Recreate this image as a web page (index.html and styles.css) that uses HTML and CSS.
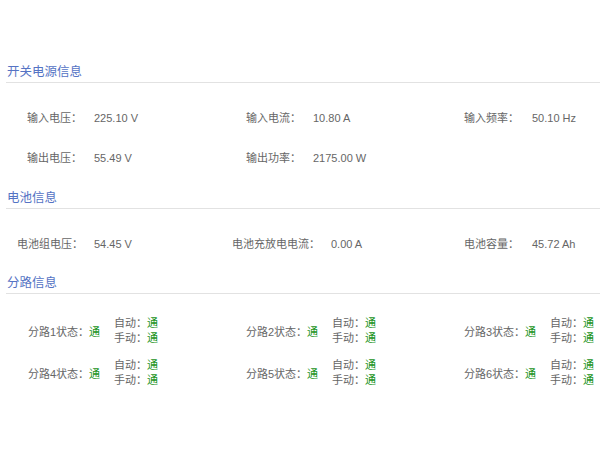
FILE: index.html
```html
<!DOCTYPE html>
<html lang="zh">
<head>
<meta charset="utf-8">
<title>设备信息</title>
<link rel="stylesheet" href="styles.css">
</head>
<body>
<div class="page">
  <h2 class="title">开关电源信息</h2>
  <div class="grid grid-power">
    <span class="lab first">输入电压：</span><span class="val">225.10 V</span>
    <span class="lab">输入电流：</span><span class="val">10.80 A</span>
    <span class="lab">输入频率：</span><span class="val">50.10 Hz</span>
    <span class="lab first">输出电压：</span><span class="val">55.49 V</span>
    <span class="lab">输出功率：</span><span class="val">2175.00 W</span>
    <span class="lab"></span><span class="val"></span>
  </div>

  <h2 class="title t2">电池信息</h2>
  <div class="grid grid-batt">
    <span class="lab first">电池组电压：</span><span class="val">54.45 V</span>
    <span class="lab">电池充放电电流：</span><span class="val">0.00 A</span>
    <span class="lab">电池容量：</span><span class="val">45.72 Ah</span>
  </div>

  <h2 class="title t3">分路信息</h2>
  <div class="branches">
    <div class="branch"><span class="blab">分路1状态：</span><span class="on">通</span><div class="sub"><div>自动：<span class="on">通</span></div><div>手动：<span class="on">通</span></div></div></div>
    <div class="branch"><span class="blab">分路2状态：</span><span class="on">通</span><div class="sub"><div>自动：<span class="on">通</span></div><div>手动：<span class="on">通</span></div></div></div>
    <div class="branch"><span class="blab">分路3状态：</span><span class="on">通</span><div class="sub"><div>自动：<span class="on">通</span></div><div>手动：<span class="on">通</span></div></div></div>
    <div class="branch"><span class="blab">分路4状态：</span><span class="on">通</span><div class="sub"><div>自动：<span class="on">通</span></div><div>手动：<span class="on">通</span></div></div></div>
    <div class="branch"><span class="blab">分路5状态：</span><span class="on">通</span><div class="sub"><div>自动：<span class="on">通</span></div><div>手动：<span class="on">通</span></div></div></div>
    <div class="branch"><span class="blab">分路6状态：</span><span class="on">通</span><div class="sub"><div>自动：<span class="on">通</span></div><div>手动：<span class="on">通</span></div></div></div>
  </div>
</div>
</body>
</html>
```

FILE: styles.css
```css
html, body {
  margin: 0;
  padding: 0;
  background: #ffffff;
}
body {
  font-family: "Liberation Sans", "Noto Sans CJK SC", sans-serif;
  font-size: 11px;
  color: #666666;
}
.page {
  padding-top: 62px;
  width: 600px;
}
.title {
  margin: 0 0 0 6px;
  padding: 2px 0 2px 1px;
  font-size: 12.5px;
  line-height: 16px;
  font-weight: normal;
  color: #5573c4;
  border-bottom: 1px solid #e2e2e2;
}
.t2 {
  margin-top: 10px;
}
.t3 {
  margin-top: 9px;
}
.grid {
  display: grid;
  grid-auto-rows: 40px;
  align-items: center;
  padding-top: 15px;
}
.grid-power {
  grid-template-columns: 94px 152px 67px 151px 68px 1fr;
}
.grid-batt {
  grid-template-columns: 94px 138px 99px 133px 68px 1fr;
}
.grid-power .first {
  padding-left: 27px;
}
.grid-batt .first {
  padding-left: 17px;
}
.lab, .val {
  white-space: nowrap;
  line-height: 15px;
}
.branches {
  display: grid;
  grid-template-columns: 218px 218px 164px;
  grid-auto-rows: 42px;
  padding-top: 16px;
}
.branch {
  display: grid;
  grid-template-columns: 61px 25px auto;
  align-items: center;
  padding-left: 28px;
  white-space: nowrap;
}
.sub {
  line-height: 15px;
}
.on {
  color: #229322;
}
```
